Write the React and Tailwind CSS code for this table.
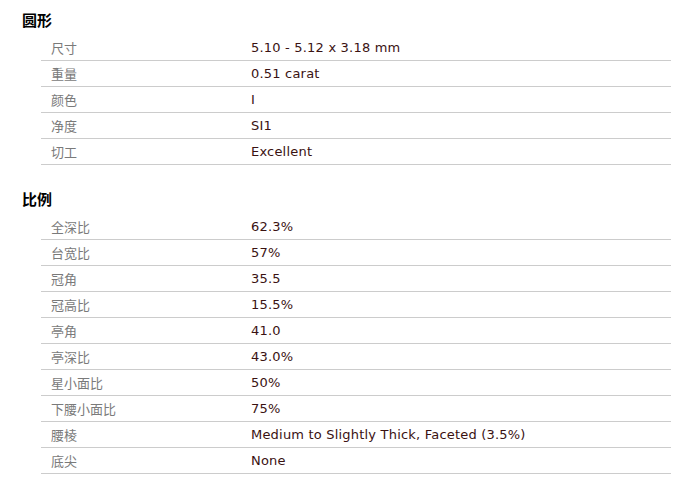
const shape = [
  ['尺寸', '5.10 - 5.12 x 3.18 mm'],
  ['重量', '0.51 carat'],
  ['颜色', 'I'],
  ['净度', 'SI1'],
  ['切工', 'Excellent'],
];

const ratio = [
  ['全深比', '62.3%'],
  ['台宽比', '57%'],
  ['冠角', '35.5'],
  ['冠高比', '15.5%'],
  ['亭角', '41.0'],
  ['亭深比', '43.0%'],
  ['星小面比', '50%'],
  ['下腰小面比', '75%'],
  ['腰棱', 'Medium to Slightly Thick, Faceted (3.5%)'],
  ['底尖', 'None'],
];

function Section({ title, rows, className = '' }) {
  return (
    <div className={className}>
      <h3 className="h-6 leading-6 pl-[22px] mb-[3px] text-[15px] font-bold text-black font-['Noto_Sans_CJK_SC',sans-serif]">
        {title}
      </h3>
      <div className="ml-[41px] w-[630px]">
        {rows.map(([label, value]) => (
          <div key={label} className="flex items-center h-[26px] border-b border-[#cccccc]">
            <span className="w-[210px] pl-[10px] text-[13px] text-[#7a7a7a] font-['Noto_Sans_CJK_SC',sans-serif]">
              {label}
            </span>
            <span className="text-[13px] tracking-[0.2px] text-[#3a1212] font-['DejaVu_Sans',sans-serif]">{value}</span>
          </div>
        ))}
      </div>
    </div>
  );
}

export default function App() {
  return (
    <div className="w-[690px] h-[484px] bg-white pt-[8px] overflow-hidden">
      <Section title="圆形" rows={shape} />
      <Section title="比例" rows={ratio} className="mt-[22px]" />
    </div>
  );
}
